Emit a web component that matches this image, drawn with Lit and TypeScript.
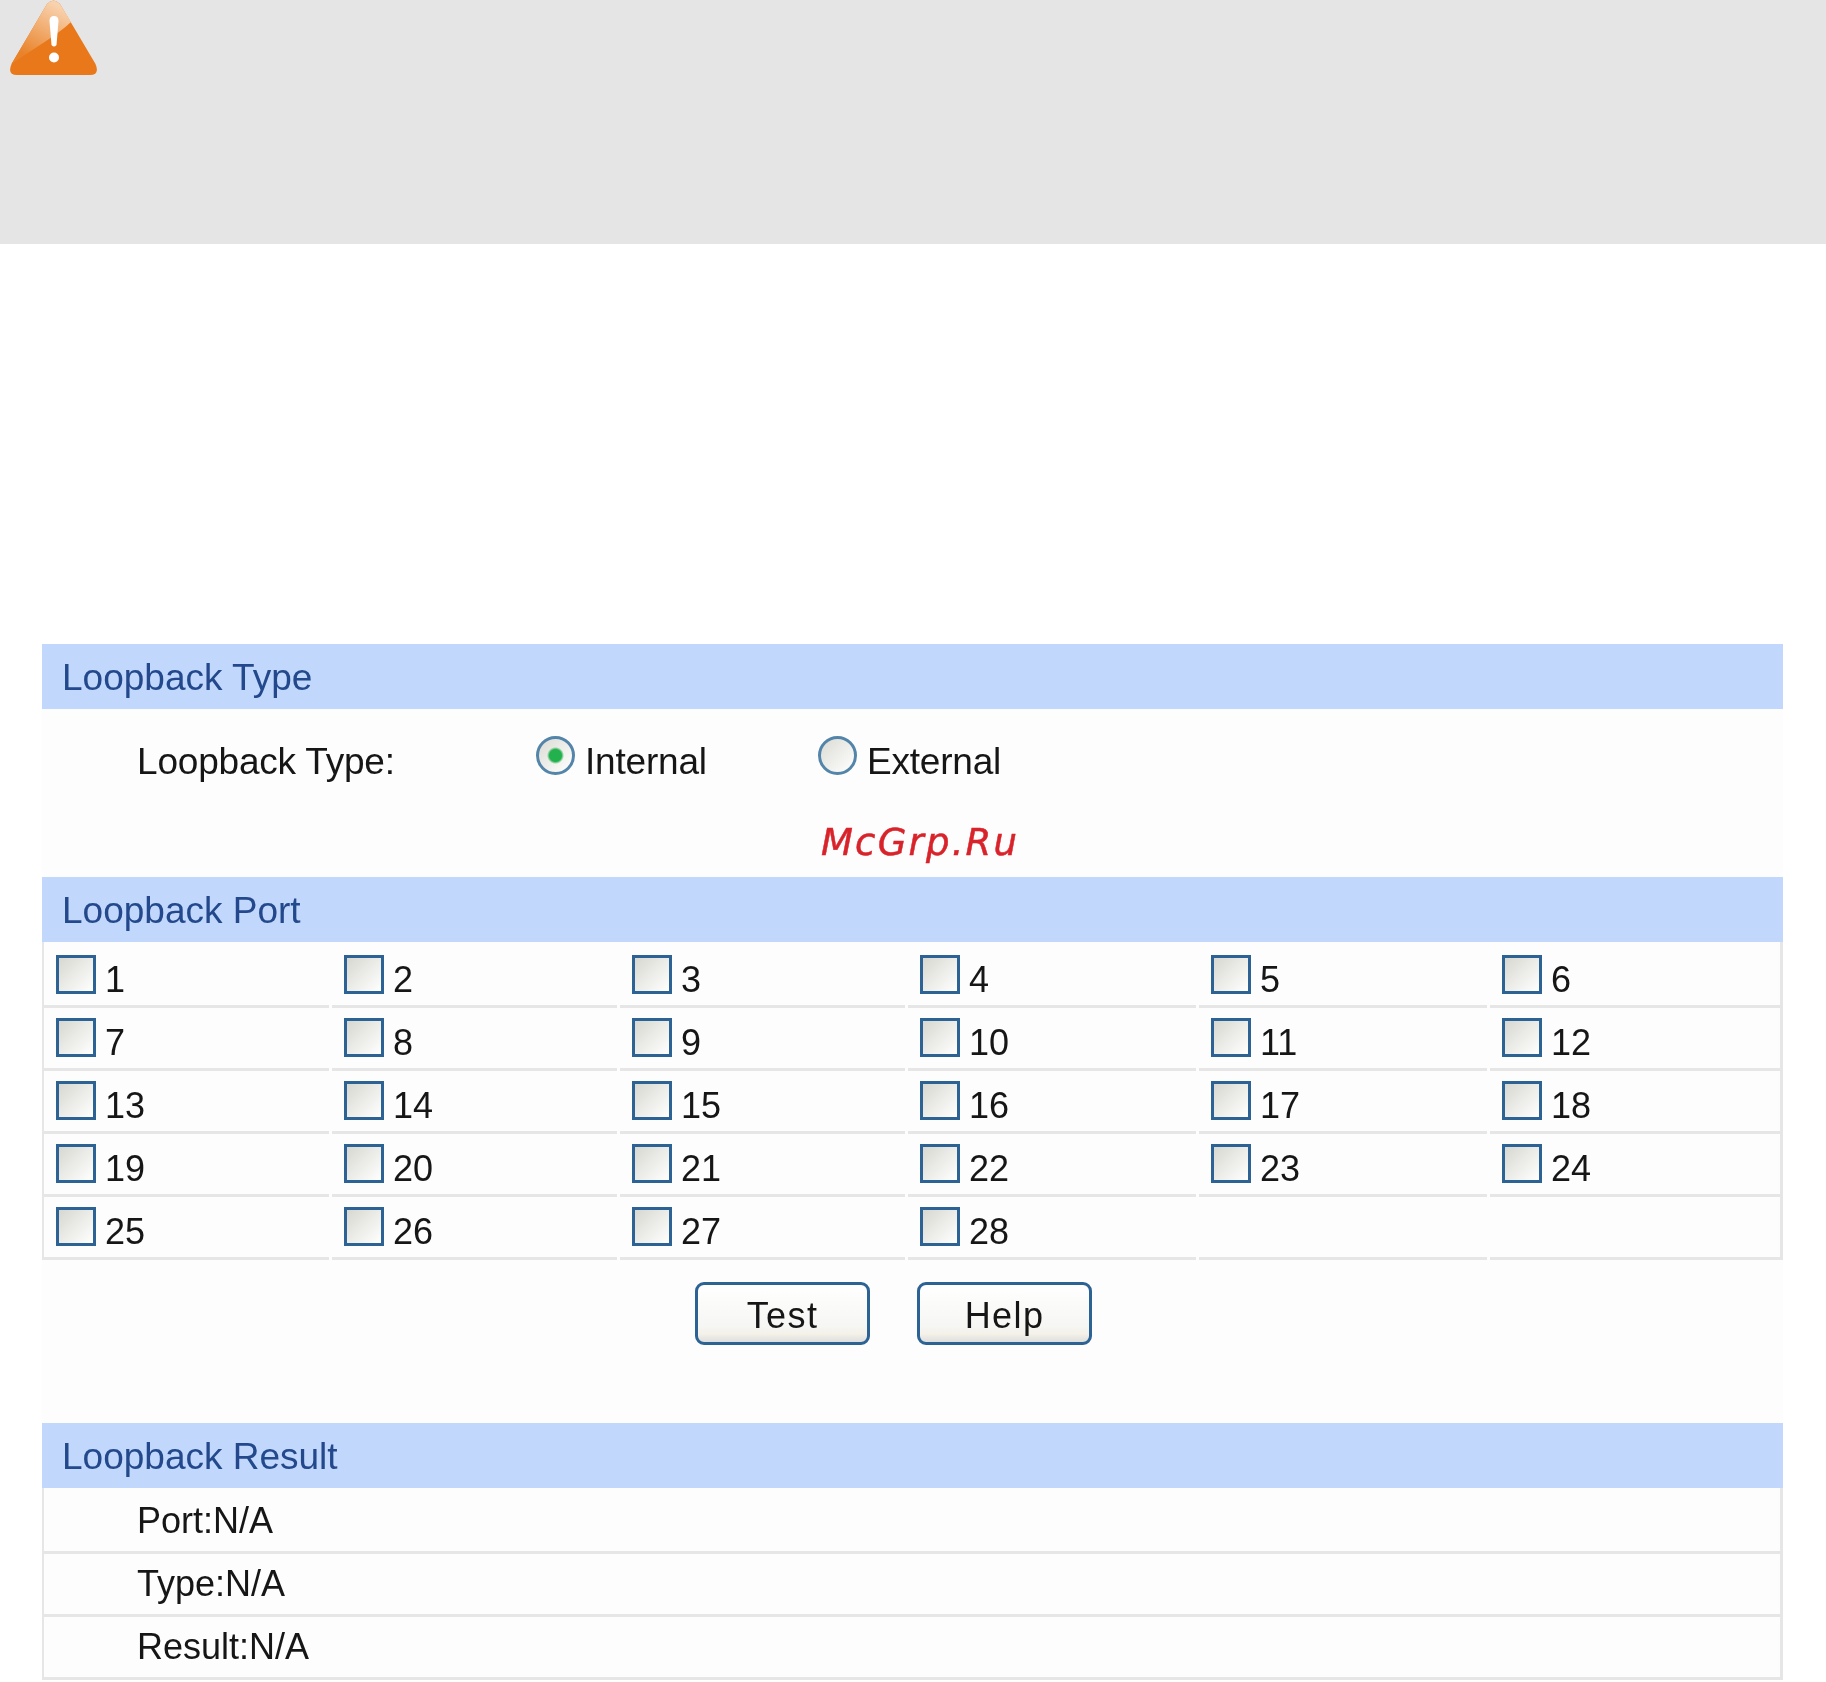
import { LitElement, html, css } from "lit";
import { customElement } from "lit/decorators.js";

@customElement("app-root")
export class AppRoot extends LitElement {
  static styles = css`
    :host {
      display: block;
      width: 1826px;
      height: 1682px;
      background: #fff;
      overflow: hidden;
      font-family: "Liberation Sans", Arial, sans-serif;
      font-size: 36px;
      color: #161616;
    }
    .band {
      height: 244px;
      box-sizing: border-box;
      background: #e5e5e5;
      padding-left: 10px;
    }
    .band svg { display: block; }
    .panel {
      position: relative;
      margin: 400px 43px 0 42px;
      background: #fdfdfd;
      filter: blur(0.35px);
    }
    .head {
      height: 65px;
      box-sizing: border-box;
      padding-left: 20px;
      background: #c2d7fc;
      color: #23498c;
      font-size: 37px;
      line-height: 67px;
      white-space: nowrap;
    }
    .type {
      height: 168px;
      box-sizing: border-box;
      padding: 23px 0 0 95px;
      display: grid;
      grid-template-columns: 399px 282px 300px;
      align-items: start;
      font-size: 37px;
      letter-spacing: -0.2px;
      line-height: 60px;
    }
    .choice { display: flex; align-items: flex-start; gap: 10px; }
    input {
      appearance: none;
      display: block;
      box-sizing: border-box;
      margin: 0;
      flex: none;
    }
    .choice input {
      width: 39px;
      height: 39px;
      margin-top: 4px;
      border: 3px solid #5384a9;
      border-radius: 50%;
      background: linear-gradient(135deg, #dcdcd5, #ffffff);
    }
    .choice input:checked {
      background:
        radial-gradient(circle at center, #22b14c 0 6px, rgba(34, 177, 76, 0) 8.5px),
        linear-gradient(135deg, #dcdcd5, #ffffff);
    }
    .mark {
      position: absolute;
      left: 779px;
      top: 177px;
      margin: 0;
      color: #d9232b;
      font-family: "DejaVu Sans", sans-serif;
      font-style: italic;
      font-size: 37px;
      letter-spacing: 2.2px;
      line-height: 44px;
      white-space: nowrap;
      -webkit-text-stroke: 0.5px #d9232b;
    }
    .frame {
      border-left: 2px solid #e6e6e6;
      border-right: 3px solid #e6e6e6;
      padding-top: 3px;
    }
    .ports {
      display: grid;
      grid-template-columns: 285px 285px 285px 288px 288px 290px;
      column-gap: 3px;
    }
    .port {
      height: 63px;
      box-sizing: border-box;
      display: flex;
      align-items: flex-start;
      padding-left: 12px;
      border-bottom: 3px solid #e6e6e6;
      line-height: 60px;
    }
    .port input {
      width: 40px;
      height: 39px;
      margin-top: 10px;
      border: 3px solid #2c6294;
      background: linear-gradient(135deg, #d8d8d1, #ffffff);
    }
    .port span { margin: 5px 0 0 9px; }
    .actions {
      height: 163px;
      box-sizing: border-box;
      padding: 22px 0 0 653px;
      display: flex;
      align-items: flex-start;
      gap: 47px;
    }
    button {
      width: 175px;
      height: 63px;
      padding: 5px 0 0;
      box-sizing: border-box;
      border: 3px solid #2c6294;
      border-radius: 9px;
      background: linear-gradient(#ffffff, #f6f6f4 72%, #f4f1e8 86%, #dedede);
      color: #161616;
      font: inherit;
      letter-spacing: 1.4px;
    }
    .row {
      height: 63px;
      box-sizing: border-box;
      padding-left: 93px;
      border-bottom: 3px solid #e6e6e6;
      line-height: 60px;
      white-space: nowrap;
    }
  `;

  private renderWarning() {
    return html`
      <svg width="90" height="78" viewBox="0 0 90 78" aria-hidden="true">
        <defs>
          <linearGradient id="gloss" x1="0.62" y1="0" x2="0.2" y2="0.85">
            <stop offset="0" stop-color="#f8d2ae" />
            <stop offset="1" stop-color="#e98228" />
          </linearGradient>
        </defs>
        <path
          d="M37 4 Q43.500 -3 50 4 L85.500 64 Q90 75 80 75 L7 75 Q-3 75 1.500 64 Z"
          fill="#e8781a"
        />
        <path
          d="M37 4 Q43.500 -3 50 4 L61 22 C46 36 24 48 3 63 L1.500 64 Z"
          fill="url(#gloss)"
        />
        <path
          d="M39.500 21 Q39.500 16 44 16 Q48.500 16 48.500 21 L46.500 45 Q44 48 41.500 45 Z"
          fill="#fff"
        />
        <circle cx="44" cy="57.500" r="5" fill="#fff" />
      </svg>
    `;
  }

  render() {
    const ports = Array.from({ length: 30 }, (_, i) => (i < 28 ? String(i + 1) : ""));
    return html`
      <div class="band">${this.renderWarning()}</div>
      <main class="panel">
        <div class="head">Loopback Type</div>
        <div class="type">
          <span>Loopback Type:</span>
          <label class="choice"><input type="radio" name="kind" checked />Internal</label>
          <label class="choice"><input type="radio" name="kind" />External</label>
        </div>
        <p class="mark">McGrp.Ru</p>
        <div class="head">Loopback Port</div>
        <div class="frame">
          <div class="ports">
            ${ports.map(
              (p) => html`<label class="port">
                ${p ? html`<input type="checkbox" /><span>${p}</span>` : ""}
              </label>`
            )}
          </div>
        </div>
        <div class="actions">
          <button>Test</button>
          <button>Help</button>
        </div>
        <div class="head">Loopback Result</div>
        <div class="frame">
          <div class="row">Port:N/A</div>
          <div class="row">Type:N/A</div>
          <div class="row">Result:N/A</div>
        </div>
      </main>
    `;
  }
}
